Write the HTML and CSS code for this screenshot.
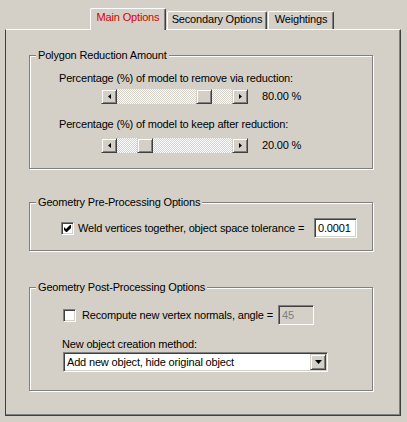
FILE: index.html
```html
<!DOCTYPE html>
<html>
<head>
<meta charset="utf-8">
<link rel="stylesheet" href="styles.css">
</head>
<body>
<div class="dialog">
  <div class="tabs">
    <div class="tab tab-active tab-main">Main Options</div>
    <div class="tab tab-sec">Secondary Options</div>
    <div class="tab tab-wt">Weightings</div>
  </div>
  <div class="panel">
    <div class="group g1">
      <div class="legend">Polygon Reduction Amount</div>
      <div class="label label1">Percentage (%) of model to remove via reduction:</div>
      <div class="slider-row row1">
        <div class="scrollbar">
          <div class="sbtn"><svg width="3" height="5" viewBox="0 0 3 5"><polygon points="3,0 3,5 0,2.5" fill="#000"/></svg></div>
          <div class="track"><span class="fill" style="width:79px"></span><span class="thumb"></span></div>
          <div class="sbtn"><svg width="3" height="5" viewBox="0 0 3 5"><polygon points="0,0 0,5 3,2.5" fill="#000"/></svg></div>
        </div>
        <span class="value">80.00 %</span>
      </div>
      <div class="label label2">Percentage (%) of model to keep after reduction:</div>
      <div class="slider-row row2">
        <div class="scrollbar">
          <div class="sbtn"><svg width="3" height="5" viewBox="0 0 3 5"><polygon points="3,0 3,5 0,2.5" fill="#000"/></svg></div>
          <div class="track"><span class="fill" style="width:20px"></span><span class="thumb"></span></div>
          <div class="sbtn"><svg width="3" height="5" viewBox="0 0 3 5"><polygon points="0,0 0,5 3,2.5" fill="#000"/></svg></div>
        </div>
        <span class="value">20.00 %</span>
      </div>
    </div>

    <div class="group g2">
      <div class="legend">Geometry Pre-Processing Options</div>
      <div class="check-row weld-row">
        <span class="checkbox"><svg width="7" height="7" viewBox="0 0 7 7"><polygon points="0,2 2,4 6,0 7,0 7,3 3,7 2,7 0,5" fill="#000"/></svg></span>
        <span class="check-text weld-text">Weld vertices together, object space tolerance =</span>
        <span class="edit tol-edit">0.0001</span>
      </div>
    </div>

    <div class="group g3">
      <div class="legend">Geometry Post-Processing Options</div>
      <div class="check-row norm-row">
        <span class="checkbox"></span>
        <span class="check-text norm-text">Recompute new vertex normals, angle =</span>
        <span class="edit angle-edit disabled">45</span>
      </div>
      <div class="label label3">New object creation method:</div>
      <div class="combo">
        <span class="combo-text">Add new object, hide original object</span>
        <span class="combo-btn"><svg width="7" height="4" viewBox="0 0 7 4"><polygon points="0,0 7,0 3.5,4" fill="#000"/></svg></span>
      </div>
    </div>
  </div>
</div>
</body>
</html>
```
FILE: styles.css
```css
* { box-sizing: border-box; }

body {
  margin: 0;
  background: #d4d0c8;
  font-family: "Liberation Sans", Arial, sans-serif;
  font-size: 11px;
  line-height: 13px;
  letter-spacing: -0.17px;
  color: #000;
}

.dialog {
  width: 407px;
  height: 422px;
  padding: 8px 0 0 5px;
}

/* Tabs */
.tabs {
  display: flex;
  align-items: flex-end;
  gap: 1px;
  height: 21px;
  padding-left: 85px;
}

.tab {
  height: 18px;
  padding-top: 1px;
  border: 1px solid #fff;
  border-bottom: none;
  border-right-color: #404040;
  border-radius: 2px 2px 0 0;
  box-shadow: inset -1px 0 #808080;
  background: #d4d0c8;
  text-align: center;
  white-space: nowrap;
}

.tab-active {
  height: 22px;
  padding-top: 2px;
  margin-bottom: -1px;
  position: relative;
  z-index: 1;
  color: #d40000;
}

.tab-main { width: 76px; }
.tab-sec { width: 100px; }
.tab-wt { width: 66px; }

/* Panel */
.panel {
  width: 396px;
  height: 387px;
  border: 1px solid #404040;
  border-top-color: #fff;
  box-shadow: inset -1px -1px #808080;
  padding: 25px 0 0 23px;
}

/* Group boxes */
.group {
  width: 344px;
  border: 1px solid #808080;
  box-shadow: inset 1px 1px #fff, 1px 1px #fff;
}

.g1 { height: 114px; }
.g2 { height: 49px; margin-top: 33px; }
.g3 { height: 104px; margin-top: 36px; }

.legend {
  width: max-content;
  margin: -7px 0 0 6px;
  padding: 0 2px;
  background: #d4d0c8;
}

.label {
  white-space: nowrap;
}

.label1 { margin: 10px 0 0 29px; }
.label2 { margin: 14px 0 0 29px; }
.label3 { margin: 13px 0 0 32px; }

/* Sliders (scrollbars) */
.slider-row {
  display: flex;
  align-items: center;
  height: 15px;
  margin-left: 71px;
}
.row1 { margin-top: 4px; }
.row2 { margin-top: 7px; }

.scrollbar {
  display: flex;
  width: 147px;
  height: 15px;
}

.sbtn, .thumb {
  width: 16px;
  height: 15px;
  flex: none;
  border: 1px solid;
  border-color: #d4d0c8 #404040 #404040 #d4d0c8;
  box-shadow: inset 1px 1px #fff, inset -1px -1px #808080;
  background: #d4d0c8;
}

.sbtn {
  display: flex;
  align-items: center;
  justify-content: center;
}

.sbtn svg { display: block; }

.track {
  flex: 1;
  display: flex;
  background: repeating-conic-gradient(#fff 0 25%, #d4d0c8 0 50%) 0 0 / 2px 2px;
}

.fill { display: block; flex: none; }

.value {
  margin-left: 14px;
  white-space: nowrap;
}

/* Check rows */
.check-row {
  display: flex;
  align-items: center;
  height: 20px;
}

.weld-row { margin: 9px 0 0 31px; width: 296px; }
.norm-row { margin: 11px 0 0 33px; width: 251px; }

.checkbox {
  width: 13px;
  height: 13px;
  flex: none;
  border: 1px solid;
  border-color: #808080 #fff #fff #808080;
  box-shadow: inset 1px 1px #404040, inset -1px -1px #d4d0c8;
  background: #fff;
  display: flex;
  align-items: center;
  justify-content: center;
}

.checkbox svg { display: block; }

.check-text { white-space: nowrap; }
.weld-text { margin-left: 4px; }
.norm-text { margin-left: 6px; }

.edit {
  height: 20px;
  margin-left: auto;
  flex: none;
  border: 1px solid;
  border-color: #808080 #fff #fff #808080;
  box-shadow: inset 1px 1px #404040, inset -1px -1px #d4d0c8;
  background: #fff;
  padding: 3px 0 0 3px;
  white-space: nowrap;
}

.tol-edit { width: 43px; }
.angle-edit { width: 36px; }

.edit.disabled {
  background: #d4d0c8;
  color: #808080;
}

/* Combo box */
.combo {
  display: flex;
  align-items: center;
  width: 265px;
  height: 20px;
  margin: 1px 0 0 33px;
  border: 1px solid;
  border-color: #808080 #fff #fff #808080;
  box-shadow: inset 1px 1px #404040, inset -1px -1px #d4d0c8;
  background: #fff;
  padding: 1px 1px 1px 3px;
}

.combo-text {
  flex: 1;
  white-space: nowrap;
}

.combo-btn {
  width: 16px;
  height: 16px;
  flex: none;
  display: flex;
  align-items: center;
  justify-content: center;
  border: 1px solid;
  border-color: #d4d0c8 #404040 #404040 #d4d0c8;
  box-shadow: inset 1px 1px #fff, inset -1px -1px #808080;
  background: #d4d0c8;
}

.combo-btn svg { display: block; }
```
